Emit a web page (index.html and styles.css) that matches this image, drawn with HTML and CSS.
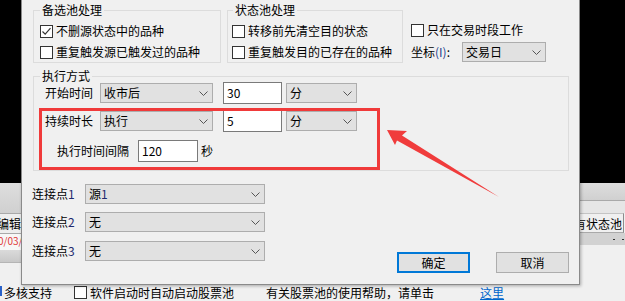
FILE: index.html
```html
<!DOCTYPE html>
<html lang="zh-CN">
<head>
<meta charset="utf-8">
<title>股票池设置</title>
<link rel="stylesheet" href="styles.css">
</head>
<body>
<div class="desktop">
  <div class="app">
    <div class="app-top">
      <div class="strip strip-left">
        <div class="sl-bar"></div>
        <div class="sl-cell"><span>编辑</span></div>
        <div class="sl-red"><span>0/03/</span></div>
        <div class="sl-gray"></div>
      </div>
      <div class="strip strip-right">
        <div class="sr-bar"></div>
        <div class="sr-band"></div>
        <div class="sr-cell"><span>有状态池</span></div>
        <div class="sr-gray"><span class="dash"></span><span class="dash"></span></div>
      </div>
    </div>
    <div class="app-status">
      <span class="mark"></span><span class="st-a">多核支持</span>
      <span class="box st-box"></span><span class="st-b">软件启动时自动启动股票池</span>
      <span class="st-c">有关股票池的使用帮助，请单击</span>
      <span class="st-link">这里</span>
    </div>
  </div>

  <div class="dialog">
    <div class="row-top">
      <div class="group g1">
        <div class="g-title">备选池处理</div>
        <div class="chk"><span class="box"><svg width="11" height="11" viewBox="0 0 11 11"><path d="M1.5 5.5 L4.2 8.2 L9.5 2.2" fill="none" stroke="#333" stroke-width="1.2"/></svg></span><span>不删源状态中的品种</span></div>
        <div class="chk gap1"><span class="box"></span><span>重复触发源已触发过的品种</span></div>
      </div>
      <div class="group g2">
        <div class="g-title">状态池处理</div>
        <div class="chk"><span class="box"></span><span>转移前先清空目的状态</span></div>
        <div class="chk gap1"><span class="box"></span><span>重复触发目的已存在的品种</span></div>
      </div>
      <div class="side">
        <div class="chk side-chk"><span class="box"></span><span>只在交易时段工作</span></div>
        <div class="coord">
          <span class="coord-lbl">坐标<span class="acc">(I)</span>:</span>
          <div class="combo c-day"><span>交易日</span><svg class="chev" width="9" height="5" viewBox="0 0 9 5"><polyline points="0.5,0.5 4.5,4.5 8.5,0.5" fill="none" stroke="#555"/></svg></div>
        </div>
      </div>
    </div>

    <div class="group g3">
      <div class="g-title">执行方式</div>
      <div class="frow r1">
        <span class="lbl">开始时间</span>
        <div class="combo c-main"><span>收市后</span><svg class="chev" width="9" height="5" viewBox="0 0 9 5"><polyline points="0.5,0.5 4.5,4.5 8.5,0.5" fill="none" stroke="#555"/></svg></div>
        <div class="edit">30</div>
        <div class="combo c-unit"><span>分</span><svg class="chev" width="9" height="5" viewBox="0 0 9 5"><polyline points="0.5,0.5 4.5,4.5 8.5,0.5" fill="none" stroke="#555"/></svg></div>
      </div>
      <div class="frow r2">
        <span class="lbl">持续时长</span>
        <div class="combo c-main"><span>执行</span><svg class="chev" width="9" height="5" viewBox="0 0 9 5"><polyline points="0.5,0.5 4.5,4.5 8.5,0.5" fill="none" stroke="#555"/></svg></div>
        <div class="edit">5</div>
        <div class="combo c-unit"><span>分</span><svg class="chev" width="9" height="5" viewBox="0 0 9 5"><polyline points="0.5,0.5 4.5,4.5 8.5,0.5" fill="none" stroke="#555"/></svg></div>
      </div>
      <div class="frow r3">
        <span class="lbl lbl-wide">执行时间间隔</span>
        <div class="edit e-int">120</div>
        <span class="unit">秒</span>
      </div>
    </div>

    <div class="bottom">
      <div class="conns">
        <div class="crow"><span class="clbl">连接点<span class="num">1</span></span><div class="combo c-conn"><span>源<span class="num">1</span></span><svg class="chev" width="9" height="5" viewBox="0 0 9 5"><polyline points="0.5,0.5 4.5,4.5 8.5,0.5" fill="none" stroke="#555"/></svg></div></div>
        <div class="crow c2"><span class="clbl">连接点<span class="num">2</span></span><div class="combo c-conn"><span>无</span><svg class="chev" width="9" height="5" viewBox="0 0 9 5"><polyline points="0.5,0.5 4.5,4.5 8.5,0.5" fill="none" stroke="#555"/></svg></div></div>
        <div class="crow c3"><span class="clbl">连接点<span class="num">3</span></span><div class="combo c-conn"><span>无</span><svg class="chev" width="9" height="5" viewBox="0 0 9 5"><polyline points="0.5,0.5 4.5,4.5 8.5,0.5" fill="none" stroke="#555"/></svg></div></div>
      </div>
      <div class="buttons">
        <div class="btn btn-default">确定</div>
        <div class="btn">取消</div>
      </div>
    </div>

    <div class="redbox"></div>
  </div>

  <svg class="arrow" width="625" height="301" viewBox="0 0 625 301">
    <polygon points="387,130 407,131 402,135.5 499,197 397,140.5 395,145" fill="#f03c3c"/>
  </svg>
</div>
</body>
</html>
```

FILE: styles.css
```css
* { box-sizing: border-box; }

html, body {
  margin: 0;
  padding: 0;
  background: #000;
}

body {
  font-family: "Microsoft YaHei", "Noto Sans CJK SC", "Noto Sans", sans-serif;
  font-size: 12px;
  line-height: 14px;
  color: #000;
}

.desktop {
  position: relative;
  width: 625px;
  height: 301px;
  overflow: hidden;
  background: #000;
}

/* ---------- underlying application window ---------- */
.app {
  position: absolute;
  left: 0;
  top: 183px;
  width: 625px;
  height: 118px;
  background: #f0f0f0;
  display: flex;
  flex-direction: column;
}

.app-top {
  height: 80px;
  display: flex;
  justify-content: space-between;
}

.strip {
  display: flex;
  flex-direction: column;
  overflow: hidden;
  white-space: nowrap;
}

.strip-left { width: 21px; }
.strip-right { width: 45px; }

.sl-bar {
  height: 31px;
  background: linear-gradient(#dedede, #d0d0d0);
  border-bottom: 1px solid #a9a9a9;
}

.sl-cell {
  height: 20px;
  line-height: 19px;
  background: #eeeeee;
  border-bottom: 1px solid #a9a9a9;
}
.sl-cell span { margin-left: -3px; display: inline-block; }

.sl-red {
  height: 16px;
  line-height: 14px;
  background: #f7f7f7;
  color: #e03a3a;
  font-size: 10px;
}
.sl-red span { margin-left: -2px; display: inline-block; }

.sl-gray {
  height: 13px;
  background: linear-gradient(#dadada, #c8c8c8);
  border-bottom: 1px solid #b5b5b5;
}

.sr-bar {
  height: 18px;
  background: linear-gradient(#dedede, #d0d0d0);
  border-bottom: 1px solid #a9a9a9;
}

.sr-band {
  height: 12px;
  background: #e6e6e6;
}

.sr-cell {
  height: 20px;
  line-height: 19px;
  margin-right: 1px;
  background: #f0f0f0;
  border-top: 1px solid #c4c4c4;
  border-right: 1px solid #8c8c8c;
  border-bottom: 1px solid #a9a9a9;
}
.sr-cell span { margin-left: -6px; display: inline-block; }

.sr-gray {
  height: 12px;
  background: #d2d2d2;
  display: flex;
  align-items: center;
  padding-left: 33px;
  gap: 7px;
}
.dash {
  width: 2px;
  height: 1px;
  background: #333;
}

.app-status {
  height: 38px;
  padding-top: 21px;
  display: flex;
  align-items: center;
  align-content: flex-start;
  white-space: nowrap;
  line-height: 14px;
}
.app-status > * { flex: none; }

.mark {
  width: 2px;
  height: 10px;
  background: #2a62c9;
  align-self: flex-start;
  margin-top: 2px;
}
.st-a { margin-left: 2px; }
.st-box { margin-left: 22px; }
.st-b { margin-left: 3px; }
.st-c { margin-left: 32px; }
.st-link {
  margin-left: 46px;
  color: #0066cc;
  text-decoration: underline;
}

/* ---------- dialog ---------- */
.dialog {
  position: absolute;
  left: 21px;
  top: 0;
  width: 559px;
  height: 285px;
  background: #f0f0f0;
  border: 1px solid #8a8a8a;
  border-top: none;
  box-shadow: 1px 1px 3px rgba(0, 0, 0, 0.3);
  padding: 10px 10px 0 11px;
  display: flex;
  flex-direction: column;
}

.row-top {
  display: flex;
  align-items: flex-start;
}

.group {
  border: 1px solid #dcdcdc;
}

.g-title {
  width: max-content;
  line-height: 12px;
  margin-top: -7px;
  padding: 0 2px;
  background: #f0f0f0;
}

.g1 { width: 188px; }
.g2 { width: 176px; margin-left: 6px; }
.g1 .g-title { margin-left: 6px; margin-bottom: 5px; }
.g2 .g-title { margin-left: 5px; margin-bottom: 5px; }

.chk {
  height: 20px;
  display: flex;
  align-items: center;
  white-space: nowrap;
}
.chk .box { margin-right: 3px; }
.g1 .chk { padding-left: 6px; }
.g2 .chk { padding-left: 4px; }
.gap1 { margin-top: 1px; }

.box {
  width: 13px;
  height: 13px;
  border: 1px solid #333;
  background: #fff;
  display: inline-flex;
  align-items: center;
  justify-content: center;
  flex: none;
}

.side {
  margin-left: 8px;
  display: flex;
  flex-direction: column;
}
.side-chk { margin-top: 10px; }

.coord {
  margin-top: 2px;
  height: 20px;
  display: flex;
  align-items: center;
}
.coord-lbl { width: 51px; white-space: nowrap; }
.acc { color: #23408e; }

/* combo box */
.combo {
  height: 20px;
  background: #e1e1e1;
  border: 1px solid #adadad;
  display: flex;
  align-items: center;
  justify-content: space-between;
  padding: 0 4px 0 3px;
  white-space: nowrap;
  flex: none;
}
.chev { flex: none; }
.c-day { width: 84px; }
.c-main { width: 113px; }
.c-unit { width: 71px; margin-left: 4px; }
.c-conn { width: 180px; }

/* edit box */
.edit {
  height: 22px;
  width: 59px;
  background: #fff;
  border: 1px solid #7a7a7a;
  padding-left: 3px;
  display: flex;
  align-items: center;
  margin-left: 10px;
  flex: none;
}

/* execution group */
.g3 {
  margin-top: 13px;
  padding-bottom: 8px;
}
.g3 .g-title { margin-left: 6px; }

.frow {
  height: 22px;
  display: flex;
  align-items: center;
  white-space: nowrap;
}
.r1, .r2 { padding-left: 11px; }
.r2 { margin-top: 6px; }
.r3 { margin-top: 8px; padding-left: 23px; }

.lbl { width: 55px; flex: none; }
.lbl-wide { width: 81px; }
.e-int { width: 60px; margin-left: 0; }
.unit { margin-left: 3px; }

/* bottom part */
.bottom {
  display: flex;
  margin-top: 13px;
}

.conns {
  display: flex;
  flex-direction: column;
  margin-left: -1px;
}

.crow {
  height: 20px;
  display: flex;
  align-items: center;
  white-space: nowrap;
}
.c2 { margin-top: 8px; }
.c3 { margin-top: 9px; }
.clbl { width: 53px; flex: none; }
.num { color: #1e2a6e; }

.buttons {
  margin-left: auto;
  margin-top: 68px;
  display: flex;
  gap: 26px;
  align-self: flex-start;
}

.btn {
  width: 73px;
  height: 21px;
  background: #e1e1e1;
  border: 1px solid #adadad;
  display: flex;
  align-items: center;
  justify-content: center;
}
.btn-default {
  border: 2px solid #0078d7;
}

/* annotation overlays */
.redbox {
  position: absolute;
  left: 17px;
  top: 108px;
  width: 341px;
  height: 62px;
  border: 3px solid #f03a3a;
}

.arrow {
  position: absolute;
  left: 0;
  top: 0;
}
```
